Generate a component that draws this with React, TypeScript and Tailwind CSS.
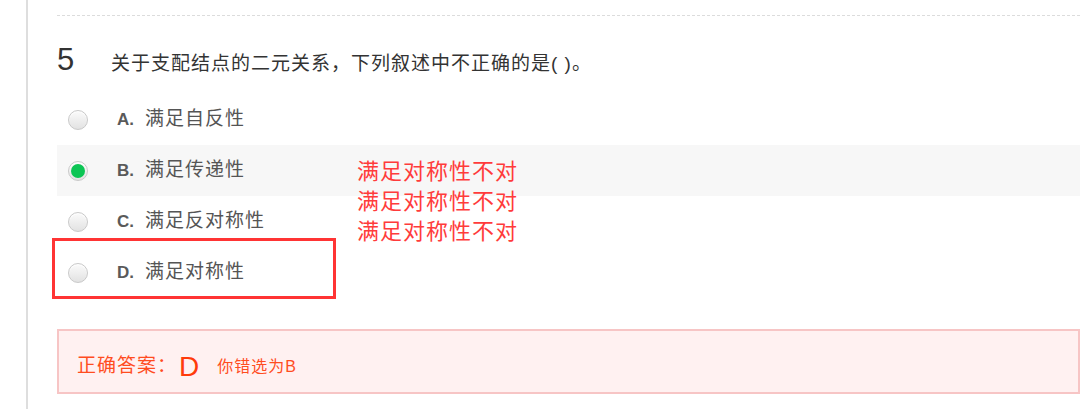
import React from "react";

const options = [
    {key: "A", text: "满足自反性", checked: false},
    {key: "B", text: "满足传递性", checked: true},
    {key: "C", text: "满足反对称性", checked: false},
    {key: "D", text: "满足对称性", checked: false},
];

const font = {fontFamily: '"Liberation Sans", "Noto Sans CJK SC", sans-serif'};

function Radio({checked}: { checked: boolean }) {
    return (
        <span
            className="w-[20px] h-[20px] rounded-full border border-[#c9c9c9] bg-gradient-to-b from-[#fbfbfb] to-[#e2e2e2] shadow-[inset_0_1px_1px_rgba(255,255,255,0.9)] flex items-center justify-center">
            {checked && <span className="w-[14px] h-[14px] rounded-full bg-[#0cc554]"></span>}
        </span>
    );
}

export default function App() {
    return (
        <div className="w-[1080px] h-[409px] bg-white overflow-hidden flex" style={font}>
            <div className="w-[26px] shrink-0"></div>
            <div className="flex-1 border-l-2 border-[#dedede] pl-[29px] relative">
                <div className="h-[16px] border-b border-dashed border-[#dcdcdc]"></div>

                <div className="flex items-baseline h-[78px] pt-[26px]">
                    <span className="text-[31px] leading-[36px] text-[#333] w-[54px]">5</span>
                    <span className="text-[19px] tracking-[1px] text-[#333]">关于支配结点的二元关系，下列叙述中不正确的是( )。</span>
                </div>

                <div className="flex flex-col">
                    {options.map((o) => (
                        <div key={o.key}
                             className={`h-[51px] flex items-center pl-[11px] ${o.checked ? "bg-[#f7f7f7]" : ""}`}>
                            <Radio checked={o.checked}/>
                            <span className="ml-[29px] text-[17px] font-bold text-[#5a5a5a] w-[28px]">{o.key}.</span>
                            <span className="text-[19px] tracking-[1px] text-[#555]">{o.text}</span>
                        </div>
                    ))}
                </div>

                <div
                    className="mt-[31px] h-[65px] border-2 border-[#f7c5c5] bg-[#fff1f1] pl-[18px] flex items-center pt-[10px]">
                    <span className="text-[19px] tracking-[1px] text-[#ff4d1f]">正确答案：</span>
                    <span className="text-[28px] text-[#ff3b0a] ml-[2px] leading-none">D</span>
                    <span className="text-[16px] tracking-[1px] text-[#ff4d1f] ml-[18px]">你错选为B</span>
                </div>

                {/* annotation overlay */}
                <div className="absolute left-[24px] top-[238px] w-[284px] h-[61px] border-[3px] border-[#ff3434]"></div>
                <div
                    className="absolute left-[329px] top-[157px] text-[22px] leading-[30px] tracking-[1px] text-[#ff3b3b]">
                    <div>满足对称性不对</div>
                    <div>满足对称性不对</div>
                    <div>满足对称性不对</div>
                </div>
            </div>
        </div>
    );
}
